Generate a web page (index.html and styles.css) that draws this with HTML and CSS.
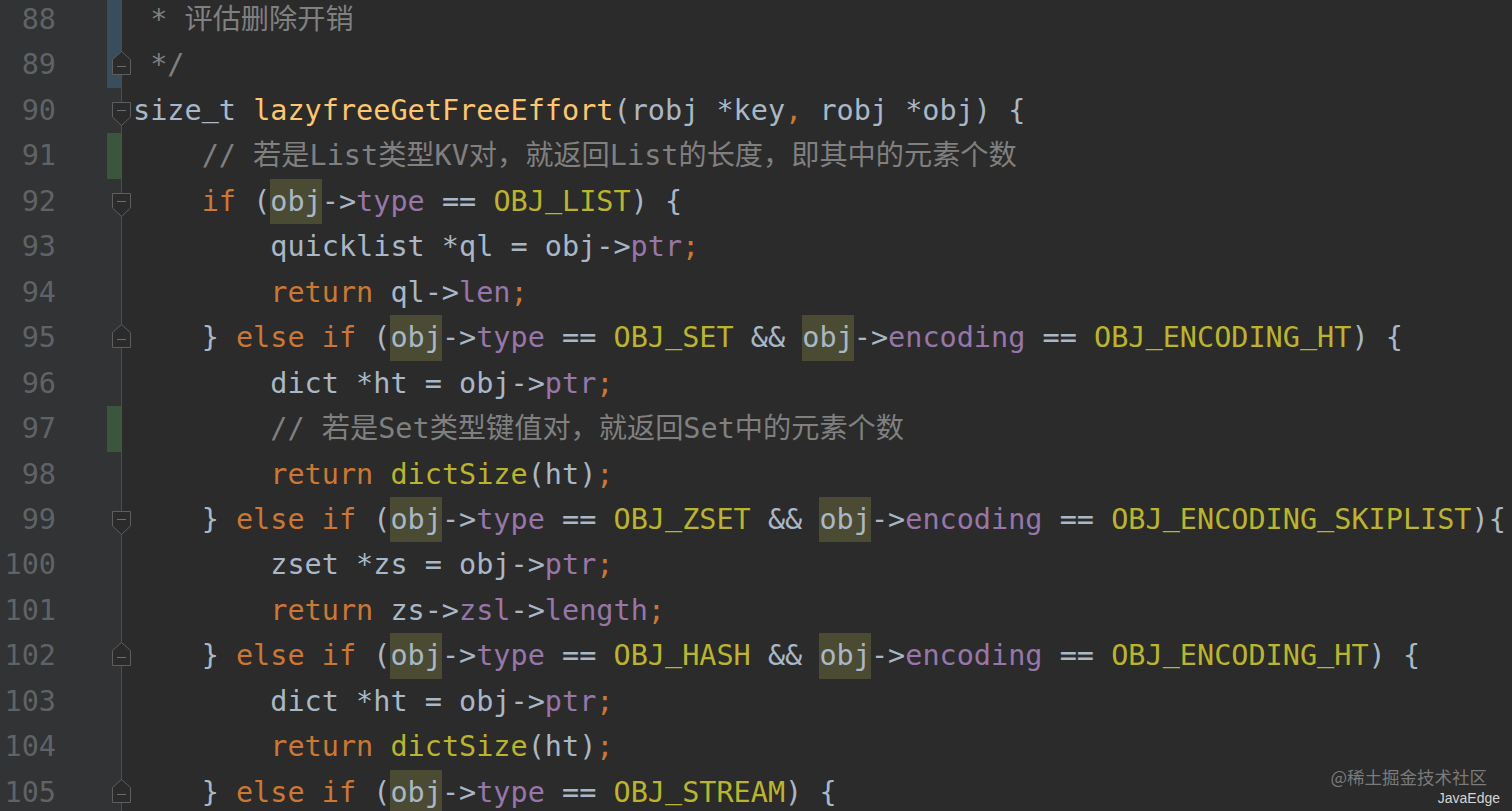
FILE: index.html
```html
<!DOCTYPE html>
<html lang="zh">
<head>
<meta charset="utf-8">
<title>lazyfree.c</title>
<link rel="stylesheet" href="styles.css">
</head>
<body>
<div class="editor">
  <div class="line"><div class="gut"><span class="num">88</span><span class="chg mod"></span></div><div class="code"><span class="c"> * <span class="z">评估删除开销</span></span></div></div>
  <div class="line"><div class="gut"><span class="num">89</span><span class="chg mod"></span></div><svg class="fold up" viewBox="0 0 19 24"><path d="M9.5 0.5 L18.5 8.5 V23.5 H0.5 V8.5 Z"/><path class="mn" d="M5 15.5 H14"/></svg><div class="code"><span class="c"> */</span></div></div>
  <div class="line"><div class="gut"><span class="num">90</span><span class="chg"></span></div><svg class="fold down" viewBox="0 0 19 24"><path d="M0.5 0.5 H18.5 V15 L9.5 23.5 L0.5 15 Z"/><path class="mn" d="M5 8.5 H14"/></svg><div class="code">size<span class="u">_</span>t <span class="f">lazyfreeGetFreeEffort</span>(robj *key<span class="k">,</span> robj *obj) {</div></div>
  <div class="line"><div class="gut"><span class="num">91</span><span class="chg add"></span></div><div class="code"><span class="c">    // <span class="z">若是</span>List<span class="z">类型</span>KV<span class="z">对，就返回</span>List<span class="z">的长度，即其中的元素个数</span></span></div></div>
  <div class="line"><div class="gut"><span class="num">92</span><span class="chg"></span></div><svg class="fold down" viewBox="0 0 19 24"><path d="M0.5 0.5 H18.5 V15 L9.5 23.5 L0.5 15 Z"/><path class="mn" d="M5 8.5 H14"/></svg><div class="code">    <span class="k">if</span> (<span class="h">obj</span>-&gt;<span class="p">type</span> == <span class="m">OBJ<span class="u">_</span>LIST</span>) {</div></div>
  <div class="line"><div class="gut"><span class="num">93</span><span class="chg"></span></div><div class="code">        quicklist *ql = obj-&gt;<span class="p">ptr</span><span class="k">;</span></div></div>
  <div class="line"><div class="gut"><span class="num">94</span><span class="chg"></span></div><div class="code">        <span class="k">return</span> ql-&gt;<span class="p">len</span><span class="k">;</span></div></div>
  <div class="line"><div class="gut"><span class="num">95</span><span class="chg"></span></div><svg class="fold up" viewBox="0 0 19 24"><path d="M9.5 0.5 L18.5 8.5 V23.5 H0.5 V8.5 Z"/><path class="mn" d="M5 15.5 H14"/></svg><div class="code">    } <span class="k">else if</span> (<span class="h">obj</span>-&gt;<span class="p">type</span> == <span class="m">OBJ<span class="u">_</span>SET</span> &amp;&amp; <span class="h">obj</span>-&gt;<span class="p">encoding</span> == <span class="m">OBJ<span class="u">_</span>ENCODING<span class="u">_</span>HT</span>) {</div></div>
  <div class="line"><div class="gut"><span class="num">96</span><span class="chg"></span></div><div class="code">        dict *ht = obj-&gt;<span class="p">ptr</span><span class="k">;</span></div></div>
  <div class="line"><div class="gut"><span class="num">97</span><span class="chg add"></span></div><div class="code"><span class="c">        // <span class="z">若是</span>Set<span class="z">类型键值对，就返回</span>Set<span class="z">中的元素个数</span></span></div></div>
  <div class="line"><div class="gut"><span class="num">98</span><span class="chg"></span></div><div class="code">        <span class="k">return</span> <span class="m">dictSize</span>(ht)<span class="k">;</span></div></div>
  <div class="line"><div class="gut"><span class="num">99</span><span class="chg"></span></div><svg class="fold down" viewBox="0 0 19 24"><path d="M0.5 0.5 H18.5 V15 L9.5 23.5 L0.5 15 Z"/><path class="mn" d="M5 8.5 H14"/></svg><div class="code">    } <span class="k">else if</span> (<span class="h">obj</span>-&gt;<span class="p">type</span> == <span class="m">OBJ<span class="u">_</span>ZSET</span> &amp;&amp; <span class="h">obj</span>-&gt;<span class="p">encoding</span> == <span class="m">OBJ<span class="u">_</span>ENCODING<span class="u">_</span>SKIPLIST</span>){</div></div>
  <div class="line"><div class="gut"><span class="num">100</span><span class="chg"></span></div><div class="code">        zset *zs = obj-&gt;<span class="p">ptr</span><span class="k">;</span></div></div>
  <div class="line"><div class="gut"><span class="num">101</span><span class="chg"></span></div><div class="code">        <span class="k">return</span> zs-&gt;<span class="p">zsl</span>-&gt;<span class="p">length</span><span class="k">;</span></div></div>
  <div class="line"><div class="gut"><span class="num">102</span><span class="chg"></span></div><svg class="fold up" viewBox="0 0 19 24"><path d="M9.5 0.5 L18.5 8.5 V23.5 H0.5 V8.5 Z"/><path class="mn" d="M5 15.5 H14"/></svg><div class="code">    } <span class="k">else if</span> (<span class="h">obj</span>-&gt;<span class="p">type</span> == <span class="m">OBJ<span class="u">_</span>HASH</span> &amp;&amp; <span class="h">obj</span>-&gt;<span class="p">encoding</span> == <span class="m">OBJ<span class="u">_</span>ENCODING<span class="u">_</span>HT</span>) {</div></div>
  <div class="line"><div class="gut"><span class="num">103</span><span class="chg"></span></div><div class="code">        dict *ht = obj-&gt;<span class="p">ptr</span><span class="k">;</span></div></div>
  <div class="line"><div class="gut"><span class="num">104</span><span class="chg"></span></div><div class="code">        <span class="k">return</span> <span class="m">dictSize</span>(ht)<span class="k">;</span></div></div>
  <div class="line"><div class="gut"><span class="num">105</span><span class="chg"></span></div><svg class="fold up" viewBox="0 0 19 24"><path d="M9.5 0.5 L18.5 8.5 V23.5 H0.5 V8.5 Z"/><path class="mn" d="M5 15.5 H14"/></svg><div class="code">    } <span class="k">else if</span> (<span class="h">obj</span>-&gt;<span class="p">type</span> == <span class="m">OBJ<span class="u">_</span>STREAM</span>) {</div></div>
</div>
<div class="watermark">
  <div class="wm-site">@稀土掘金技术社区</div>
  <div class="wm-author">JavaEdge</div>
</div>
</body>
</html>
```

FILE: styles.css
```css
html, body {
  margin: 0;
  padding: 0;
  height: 811px;
  overflow: hidden;
  background: #2b2b2b;
}

.editor {
  margin-top: -3.2px;
  font-family: "DejaVu Sans Mono", "Noto Sans CJK SC", monospace;
  font-size: 28.5px;
  line-height: 45.47px;
  color: #a9b7c6;
}

.line {
  position: relative;
  display: flex;
  height: 45.47px;
}

.gut {
  width: 121px;
  flex: none;
  display: flex;
  background: #313335;
}

.num {
  width: 56px;
  text-align: right;
  color: #606366;
}

.chg {
  margin-left: auto;
  width: 14px;
  height: 100%;
}

.chg.mod { background: #3a4d5c; }
.chg.add { background: #3b563c; }

.code {
  flex: 1;
  border-left: 1px solid #4b4d4f;
  padding-left: 11px;
  white-space: pre;
}

.fold {
  position: absolute;
  left: 112px;
  width: 19px;
  height: 24px;
  z-index: 1;
}
.fold.down { top: 14px; }
.fold.up { top: 9px; }
.fold path {
  fill: #2b2b2b;
  stroke: #5c5e60;
  stroke-width: 1;
}
.fold path.mn {
  fill: none;
  stroke: #6b6d70;
}

.k { color: #cc7832; }
.f { color: #ffc66d; }
.c { color: #808080; }
.z { font-size: 28.2px; }
.m { color: #bbb529; }
.p { color: #9876aa; }
.u {
  display: inline-block;
  vertical-align: 4px;
  line-height: 1;
}
.h {
  display: inline-block;
  background: #4b4a33;
}

.watermark {
  position: absolute;
  right: 12px;
  bottom: 4px;
  display: flex;
  flex-direction: column;
  align-items: flex-end;
  font-family: "Noto Sans CJK SC", "Liberation Sans", sans-serif;
}
.wm-site {
  font-size: 17.5px;
  line-height: 24px;
  color: rgba(150, 150, 150, 0.75);
  margin-right: 13px;
}
.wm-author {
  font-family: "Liberation Sans", "Noto Sans", sans-serif;
  font-size: 14px;
  line-height: 18px;
  color: #d4d4d4;
}
```
